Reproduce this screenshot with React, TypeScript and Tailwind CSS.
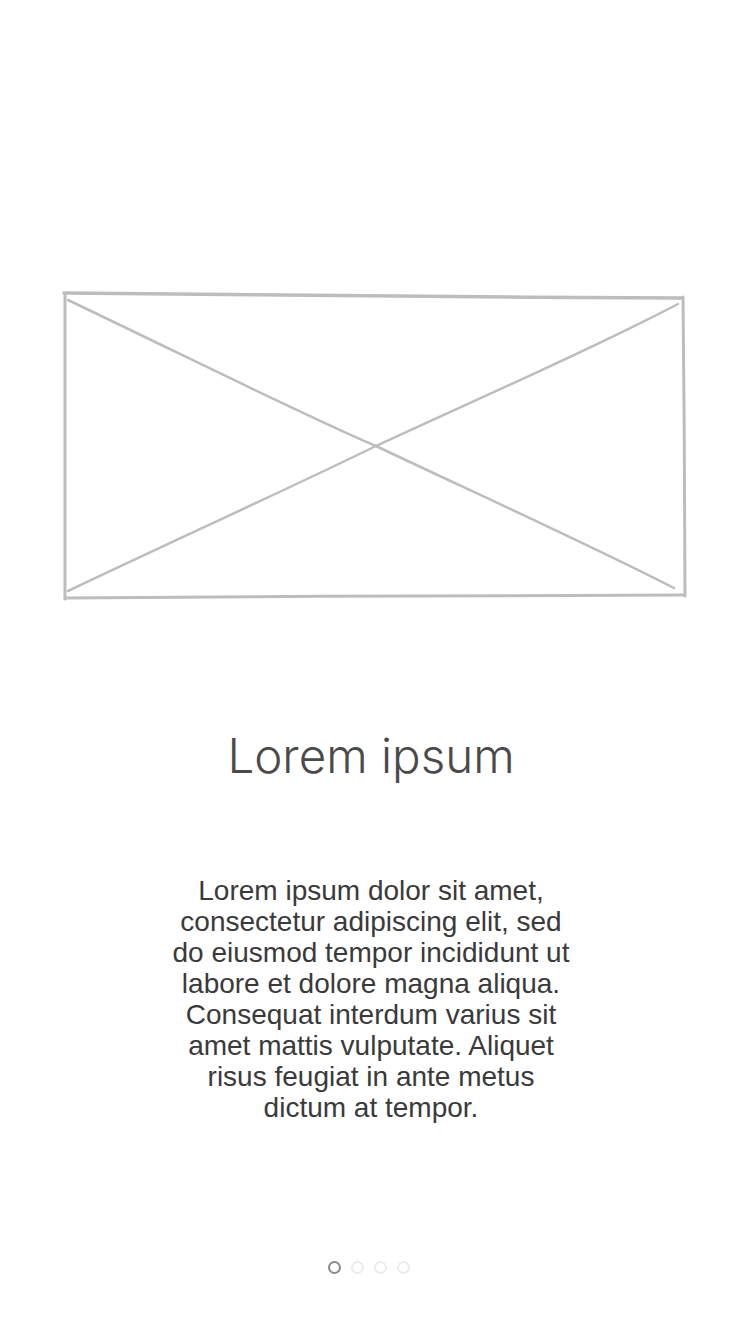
import React from "react";

function Placeholder() {
  return (
    <svg width="628" height="314" viewBox="0 0 628 314" className="block">
      <g fill="none" stroke="#bdbdbd" strokeLinecap="round" strokeLinejoin="round">
        <path d="M2 2 C 150 4, 400 6, 620 7" strokeWidth="3.5" />
        <path d="M3 4 L 3 308" strokeWidth="3" />
        <path d="M3 307 C 200 305, 450 305, 622 304" strokeWidth="3" />
        <path d="M621 6 C 622 100, 623 220, 623 305" strokeWidth="3" />
        <path d="M6 9 C 150 78, 250 128, 314 155 C 400 196, 520 250, 612 297" strokeWidth="2.5" />
        <path d="M6 300 C 120 246, 230 196, 314 155 C 420 106, 530 58, 616 13" strokeWidth="2.5" />
      </g>
    </svg>
  );
}

export default function App() {
  return (
    <div
      className="w-[750px] h-[1334px] bg-white flex flex-col items-center"
      style={{ fontFamily: '"Liberation Sans", Arial, sans-serif' }}
    >
      <div className="mt-[291px] ml-[2px]">
        <Placeholder />
      </div>
      <h1
        className="mt-[123px] mr-[8px] text-[47.5px] leading-[56px] font-light text-[#4a4a4a]"
        style={{ fontFamily: 'Inter, "Liberation Sans", sans-serif' }}
      >
        Lorem ipsum
      </h1>
      <p className="mt-[91px] mr-[8px] w-[410px] text-center text-[28px] leading-[31px] text-[#3a3a3a]">
        Lorem ipsum dolor sit amet, consectetur adipiscing elit, sed do eiusmod tempor incididunt ut labore et dolore magna aliqua. Consequat interdum varius sit amet mattis vulputate. Aliquet risus feugiat in ante metus dictum at tempor.
      </p>
      <div className="mt-auto mb-[60px] mr-[12px] flex gap-[10px]">
        <span className="w-[13px] h-[13px] rounded-full border-[2.5px] border-[#8a8a8a]" />
        <span className="w-[13px] h-[13px] rounded-full border-[2px] border-[#ececec]" />
        <span className="w-[13px] h-[13px] rounded-full border-[2px] border-[#ececec]" />
        <span className="w-[13px] h-[13px] rounded-full border-[2px] border-[#ececec]" />
      </div>
    </div>
  );
}
